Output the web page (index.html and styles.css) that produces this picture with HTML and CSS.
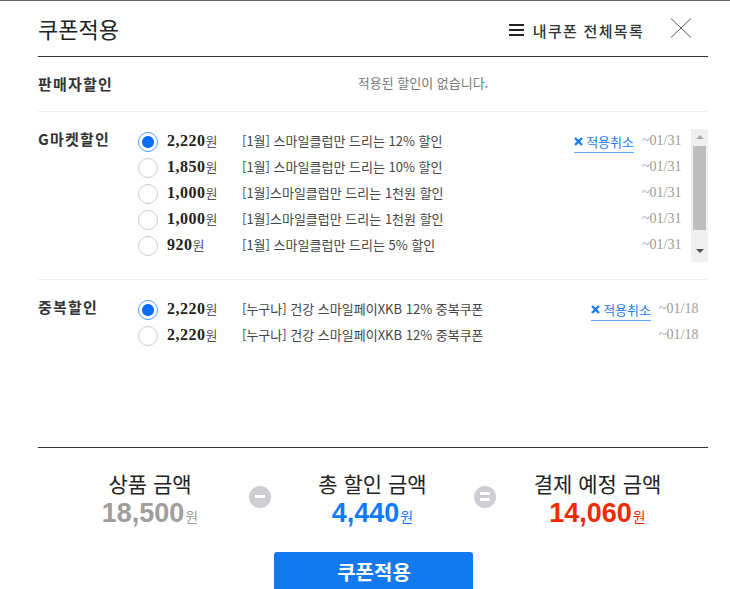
FILE: index.html
```html
<!DOCTYPE html>
<html lang="ko">
<head>
  <meta charset="UTF-8">
  <title>쿠폰적용</title>
  <link rel="stylesheet" href="styles.css">
</head>
<body>
  <div class="popup">
    <div class="header">
      <h1>쿠폰적용</h1>
      <a class="all-link">
        <span class="menu-icon"><i></i><i></i><i></i></span>
        내쿠폰 전체목록
      </a>
      <svg class="close" width="22" height="20" viewBox="0 0 22 20">
        <path d="M1 0.5L21 19.5M21 0.5L1 19.5" stroke="#555" stroke-width="1" fill="none"/>
      </svg>
    </div>

    <div class="section section-seller">
      <div class="section-title">판매자할인</div>
      <div class="empty">적용된 할인이 없습니다.</div>
    </div>

    <div class="section section-market">
      <div class="section-title">G마켓할인</div>
      <div class="scroll-box">
        <ul class="coupons">
          <li class="coupon">
            <span class="radio on"></span>
            <span class="amount">2,220<em>원</em></span>
            <span class="desc">[1월] 스마일클럽만 드리는 12% 할인</span>
            <a class="cancel"><svg width="9" height="9" viewBox="0 0 9 9"><path d="M1 1L8 8M8 1L1 8" stroke="#1a7cf0" stroke-width="2.4" fill="none"/></svg>적용취소</a>
            <span class="date">~01/31</span>
          </li>
          <li class="coupon">
            <span class="radio"></span>
            <span class="amount">1,850<em>원</em></span>
            <span class="desc">[1월] 스마일클럽만 드리는 10% 할인</span>
            <span class="date">~01/31</span>
          </li>
          <li class="coupon">
            <span class="radio"></span>
            <span class="amount">1,000<em>원</em></span>
            <span class="desc">[1월]스마일클럽만 드리는 1천원 할인</span>
            <span class="date">~01/31</span>
          </li>
          <li class="coupon">
            <span class="radio"></span>
            <span class="amount">1,000<em>원</em></span>
            <span class="desc">[1월]스마일클럽만 드리는 1천원 할인</span>
            <span class="date">~01/31</span>
          </li>
          <li class="coupon">
            <span class="radio"></span>
            <span class="amount">920<em>원</em></span>
            <span class="desc">[1월] 스마일클럽만 드리는 5% 할인</span>
            <span class="date">~01/31</span>
          </li>
        </ul>
        <div class="scrollbar">
          <span class="arrow-up"></span>
          <span class="thumb"></span>
          <span class="arrow-down"></span>
        </div>
      </div>
    </div>

    <div class="section section-dup">
      <div class="section-title">중복할인</div>
      <ul class="coupons">
        <li class="coupon">
          <span class="radio on"></span>
          <span class="amount">2,220<em>원</em></span>
          <span class="desc">[누구나] 건강 스마일페이XKB 12% 중복쿠폰</span>
          <a class="cancel"><svg width="9" height="9" viewBox="0 0 9 9"><path d="M1 1L8 8M8 1L1 8" stroke="#1a7cf0" stroke-width="2.4" fill="none"/></svg>적용취소</a>
          <span class="date">~01/18</span>
        </li>
        <li class="coupon">
          <span class="radio"></span>
          <span class="amount">2,220<em>원</em></span>
          <span class="desc">[누구나] 건강 스마일페이XKB 12% 중복쿠폰</span>
          <span class="date">~01/18</span>
        </li>
      </ul>
    </div>

    <div class="summary">
      <div class="sum-col">
        <div class="sum-label">상품 금액</div>
        <div class="sum-price gray">18,500<em>원</em></div>
      </div>
      <span class="op"><i></i></span>
      <div class="sum-col">
        <div class="sum-label">총 할인 금액</div>
        <div class="sum-price blue">4,440<em>원</em></div>
      </div>
      <span class="op"><i></i><i></i></span>
      <div class="sum-col">
        <div class="sum-label">결제 예정 금액</div>
        <div class="sum-price red">14,060<em>원</em></div>
      </div>
    </div>

    <div class="actions">
      <button class="apply-btn">쿠폰적용</button>
    </div>
  </div>
</body>
</html>
```

FILE: styles.css
```css
* {
  margin: 0;
  padding: 0;
  box-sizing: border-box;
}

html, body {
  height: 589px;
  overflow: hidden;
  background: white;
}

body {
  font-family: "Noto Sans CJK KR", "Liberation Sans", sans-serif;
  color: #222;
}

.popup {
  border-top: 1px solid #666;
  padding: 0 22px 0 38px;
}

ul {
  list-style: none;
}

.header {
  display: flex;
  align-items: center;
  height: 56px;
  padding-bottom: 2px;
  border-bottom: 1px solid #333;
}

.header h1 {
  font-size: 22px;
  font-weight: 400;
  line-height: 1;
  color: #222;
  flex: 1;
}

.all-link {
  display: flex;
  align-items: center;
  font-size: 15px;
  font-weight: 500;
  letter-spacing: 1.3px;
  color: #333;
  margin-top: 5px;
}

.menu-icon {
  display: flex;
  flex-direction: column;
  gap: 3px;
  width: 15px;
  margin-right: 9px;
}

.menu-icon i {
  display: block;
  height: 2px;
  background: #222;
}

.close {
  margin: 0 16px 0 26px;
}

.section {
  display: flex;
  border-bottom: 1px solid #eee;
}

.section-title {
  width: 100px;
  flex: none;
  font-size: 15px;
  font-weight: 700;
  letter-spacing: 1.2px;
  color: #333;
}

.section-seller {
  height: 55px;
  align-items: center;
}

.section-seller .section-title {
  margin-bottom: 2px;
}

.empty {
  flex: 1;
  text-align: center;
  font-size: 13px;
  color: #777;
  margin-bottom: 3px;
}

.section-market {
  height: 168px;
  padding-top: 17px;
}

.section-market .section-title {
  line-height: 20px;
}

.scroll-box {
  display: flex;
  flex: 1;
  height: 133px;
}

.scroll-box .coupons {
  flex: 1;
  padding-right: 10px;
}

.coupons {
  flex: 1;
}

.coupon {
  display: flex;
  align-items: center;
  height: 26px;
  font-size: 13px;
}

.radio {
  flex: none;
  width: 20px;
  height: 20px;
  border: 1px solid #ccc;
  border-radius: 50%;
  margin-right: 9px;
}

.radio.on {
  border-color: #4a9bff;
  background: radial-gradient(circle, #0a6cf5 0, #0a6cf5 5.5px, white 6.5px);
}

.amount {
  width: 75px;
  flex: none;
  font-family: "Liberation Serif", serif;
  font-size: 16px;
  font-weight: 700;
  letter-spacing: 0.5px;
  color: #222;
  margin-bottom: 3px;
}

.amount em {
  font-family: "Noto Sans CJK KR", sans-serif;
  font-style: normal;
  font-size: 13px;
  font-weight: 400;
  letter-spacing: 0;
  color: #555;
}

.desc {
  flex: 1;
  color: #444;
  white-space: nowrap;
  margin-bottom: 3px;
}

.cancel {
  display: flex;
  align-items: center;
  color: #1a7cf0;
  border-bottom: 1px solid #5fa5fa;
  line-height: 20px;
  margin-right: 8px;
}

.cancel svg {
  margin-right: 3px;
}

.date {
  width: 39px;
  flex: none;
  font-family: "Liberation Serif", serif;
  font-size: 14px;
  color: #a09a94;
  text-align: right;
  white-space: nowrap;
  margin-bottom: 2px;
}

.scrollbar {
  display: flex;
  flex-direction: column;
  align-items: center;
  width: 17px;
  flex: none;
  background: #f0f0f0;
}

.thumb {
  display: block;
  width: 13px;
  height: 84px;
  background: #bebebe;
}

.arrow-up, .arrow-down {
  display: block;
  width: 0;
  height: 0;
  border-left: 4px solid transparent;
  border-right: 4px solid transparent;
}

.arrow-up {
  border-bottom: 4px solid #aaa;
  margin: 6px 0 7px;
}

.arrow-down {
  border-top: 4px solid #505050;
  margin-top: 19px;
}

.section-dup {
  height: 168px;
  padding-top: 17px;
  border-bottom: 1px solid #333;
}

.section-dup .section-title {
  line-height: 20px;
}

.section-dup .date {
  margin-right: 10px;
}

.summary {
  display: flex;
  align-items: center;
  height: 104px;
  padding-bottom: 1px;
}

.sum-col {
  text-align: center;
  width: 203px;
}

.sum-col:first-child {
  width: 198px;
  margin-left: 13px;
}

.sum-label {
  font-family: "Liberation Sans", "Noto Sans CJK KR", sans-serif;
  font-size: 21px;
  line-height: 27px;
  color: #222;
}

.sum-price {
  font-family: "Liberation Sans", sans-serif;
  font-size: 27px;
  font-weight: 700;
  line-height: 30px;
}

.sum-price em {
  font-family: "Liberation Sans", "Noto Sans CJK KR", sans-serif;
  font-style: normal;
  font-size: 14px;
  font-weight: 400;
  line-height: 1;
  margin-left: 1px;
}

.gray { color: #a09d9a; }
.blue { color: #0f7bff; }
.red { color: #f02a00; }

.op {
  display: flex;
  flex-direction: column;
  align-items: center;
  justify-content: center;
  gap: 3px;
  width: 22px;
  height: 22px;
  flex: none;
  border-radius: 50%;
  background: #cdcdd3;
  margin-top: -6px;
}

.op i {
  display: block;
  width: 10px;
  height: 3px;
  background: white;
}

.actions {
  display: flex;
  justify-content: center;
}

.apply-btn {
  width: 199px;
  height: 50px;
  border: none;
  border-radius: 3px;
  background: #1279ee;
  color: white;
  font-family: "Noto Sans CJK KR", sans-serif;
  font-size: 20px;
  font-weight: 700;
  padding: 0 0 11px 2px;
}
```
